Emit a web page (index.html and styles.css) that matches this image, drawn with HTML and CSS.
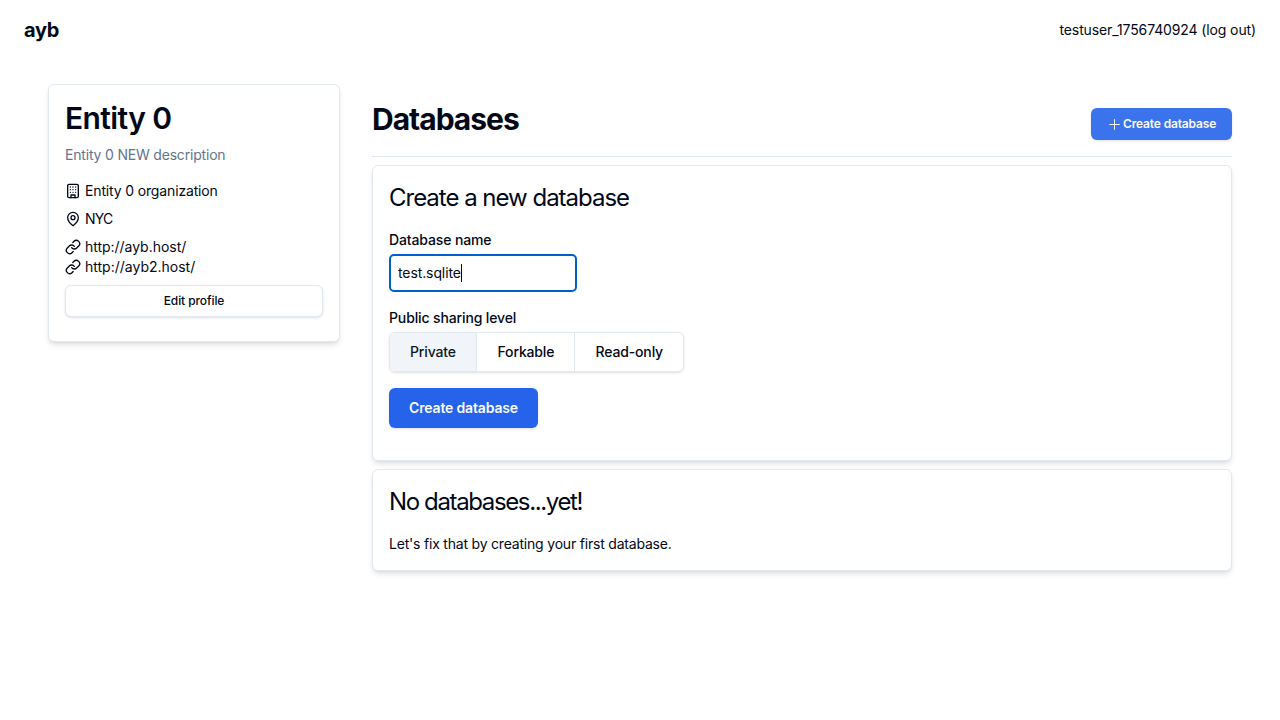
FILE: index.html
```html
<!DOCTYPE html>
<html lang="en">
<head>
<meta charset="utf-8">
<title>ayb</title>
<link rel="stylesheet" href="styles.css">
</head>
<body>
<header class="topbar">
  <div class="brand"><span>ayb</span></div>
  <div class="account"><span>testuser_1756740924 (log out)</span></div>
</header>
<div class="layout">
  <aside class="card profile">
    <h1 class="profile-name"><span>Entity 0</span></h1>
    <p class="profile-desc"><span>Entity 0 NEW description</span></p>
    <div class="fact">
      <svg class="icon" viewBox="0 0 24 24"><rect x="4" y="2" width="16" height="20" rx="2"/><path d="M9 22v-4h6v4M8 6h.01M16 6h.01M12 6h.01M12 10h.01M12 14h.01M16 10h.01M16 14h.01M8 10h.01M8 14h.01"/></svg>
      <span class="t-org">Entity 0 organization</span>
    </div>
    <div class="fact">
      <svg class="icon" viewBox="0 0 24 24"><path d="M20 10c0 6-8 12-8 12s-8-6-8-12a8 8 0 0 1 16 0Z"/><circle cx="12" cy="10" r="3"/></svg>
      <span class="t-loc">NYC</span>
    </div>
    <div class="links">
      <div class="link">
        <svg class="icon" viewBox="0 0 24 24"><path d="M10 13a5 5 0 0 0 7.54.54l3-3a5 5 0 0 0-7.07-7.07l-1.72 1.71"/><path d="M14 11a5 5 0 0 0-7.54-.54l-3 3a5 5 0 0 0 7.07 7.07l1.71-1.71"/></svg>
        <span class="t-link1">http://ayb.host/</span>
      </div>
      <div class="link">
        <svg class="icon" viewBox="0 0 24 24"><path d="M10 13a5 5 0 0 0 7.54.54l3-3a5 5 0 0 0-7.07-7.07l-1.72 1.71"/><path d="M14 11a5 5 0 0 0-7.54-.54l-3 3a5 5 0 0 0 7.07 7.07l1.71-1.71"/></svg>
        <span class="t-link2">http://ayb2.host/</span>
      </div>
    </div>
    <button class="edit"><span>Edit profile</span></button>
  </aside>
  <main class="main">
    <div class="heading">
      <h1 class="heading-title"><span>Databases</span></h1>
      <button class="create-small">
        <svg class="plus" viewBox="0 0 15 15"><path d="M7.5 2.25v10.5M2.25 7.5h10.5"/></svg>
        <span>Create database</span>
      </button>
    </div>
    <section class="card form">
      <h3 class="card-title t-create"><span>Create a new database</span></h3>
      <div class="label t-name"><span>Database name</span></div>
      <div class="input"><span>test.sqlite</span><i class="caret"></i></div>
      <div class="label t-level"><span>Public sharing level</span></div>
      <div class="segments">
        <div class="segment private"><span>Private</span></div>
        <div class="segment forkable"><span>Forkable</span></div>
        <div class="segment readonly"><span>Read-only</span></div>
      </div>
      <button class="create"><span>Create database</span></button>
    </section>
    <section class="card empty">
      <h3 class="card-title t-none"><span>No databases...yet!</span></h3>
      <p class="hint"><span>Let's fix that by creating your first database.</span></p>
    </section>
  </main>
</div>
</body>
</html>
```

FILE: styles.css
```css
* { box-sizing: border-box; }
body {
  margin: 0;
  min-height: 100vh;
  background: #fff;
  color: #020817;
  font: 14px/20px Inter, "Liberation Sans", sans-serif;
}
h1, h3, p { margin: 0; }
span { white-space: nowrap; }
button { font: inherit; color: inherit; margin: 0; }
.topbar {
  display: flex;
  justify-content: space-between;
  align-items: center;
  height: 60px;
  padding: 0 24px;
}
.brand { font-size: 20px; line-height: 28px; font-weight: 700; letter-spacing: -0.3px; }
.account { letter-spacing: -0.12px; }
.layout {
  display: flex;
  align-items: flex-start;
  gap: 32px;
  padding: 24px 48px 0;
}
.card {
  border: 1px solid #e2e8f0;
  border-radius: 6px;
  background: #fff;
  box-shadow: 0 4px 6px -1px rgba(0,0,0,.1), 0 2px 4px -2px rgba(0,0,0,.1);
  padding: 16px;
}
.profile { width: 292px; height: 258px; }
.profile-name { margin-top: -1px; font-size: 30px; line-height: 36px; font-weight: 600; letter-spacing: -0.6px; }
.profile-desc { color: #64748b; margin: 9px 0 16px; letter-spacing: -0.19px; }
.fact { display: flex; align-items: center; gap: 4px; margin-bottom: 8px; }
.link { display: flex; align-items: center; gap: 4px; }
.t-org { letter-spacing: -0.15px; }
.t-loc { letter-spacing: -0.8px; }
.t-link1 { letter-spacing: -0.03px; }
.icon {
  width: 16px;
  height: 16px;
  fill: none;
  stroke: currentColor;
  stroke-width: 2;
  stroke-linecap: round;
  stroke-linejoin: round;
}
.edit {
  display: block;
  width: 100%;
  height: 32px;
  margin-top: 8px;
  padding: 0;
  border: 1px solid #e2e8f0;
  border-radius: 6px;
  background: #fff;
  box-shadow: 0 1px 3px rgba(0,0,0,.1), 0 1px 2px -1px rgba(0,0,0,.1);
  font-size: 12px;
  font-weight: 500;
  letter-spacing: -0.1px;
}
.main { flex: 1; display: flex; flex-direction: column; gap: 8px; }
.heading {
  display: flex;
  justify-content: space-between;
  height: 73px;
  padding-top: 17px;
  border-bottom: 1px solid #e2e8f0;
}
.heading-title { font-size: 30px; line-height: 36px; font-weight: 700; letter-spacing: -1px; }
.create-small {
  display: flex;
  align-items: center;
  gap: 1px;
  width: 141px;
  height: 32px;
  margin-top: 7px;
  padding: 0 0 0 16px;
  border: 0;
  border-radius: 6px;
  background: #3b73ed;
  color: #f8fafc;
  box-shadow: 0 1px 3px rgba(0,0,0,.1), 0 1px 2px -1px rgba(0,0,0,.1);
  font-size: 12px;
  font-weight: 600;
  letter-spacing: -0.15px;
}
.plus { width: 15px; height: 15px; flex: none; fill: none; stroke: currentColor; stroke-width: 1; }
.form { height: 296px; }
.card-title { font-size: 24px; line-height: 32px; font-weight: 400; }
.t-create { letter-spacing: -1.01px; }
.t-none { letter-spacing: -1.37px; }
.label { font-weight: 500; letter-spacing: -0.13px; }
.form .t-name { margin-top: 16px; }
.input {
  display: flex;
  align-items: center;
  width: 188px;
  height: 38px;
  margin: 4px 0 16px;
  padding-left: 7px;
  border: 2px solid #005fcc;
  border-radius: 5px;
  letter-spacing: -0.1px;
}
.caret { width: 1px; height: 18px; background: #020817; }
.segments {
  display: flex;
  width: 295px;
  height: 40px;
  margin-top: 4px;
  border: 1px solid #e2e8f0;
  border-radius: 6px;
  box-shadow: 0 1px 3px rgba(0,0,0,.1), 0 1px 2px -1px rgba(0,0,0,.1);
  font-weight: 500;
  letter-spacing: -0.15px;
}
.segment { display: flex; align-items: center; padding-left: 20.5px; border-left: 1px solid #e2e8f0; }
.private { width: 86px; padding-left: 20px; border-left: 0; background: #f1f5f9; color: #0f172a; border-radius: 5px 0 0 5px; }
.forkable { width: 98px; }
.readonly { flex: 1; }
.create {
  display: block;
  width: 149px;
  height: 40px;
  margin-top: 16px;
  padding: 0;
  border: 0;
  border-radius: 6px;
  background: #2563eb;
  color: #f8fafc;
  box-shadow: 0 1px 3px rgba(0,0,0,.1), 0 1px 2px -1px rgba(0,0,0,.1);
  font-weight: 600;
  letter-spacing: -0.17px;
}
.empty { height: 102px; }
.hint { margin-top: 16px; letter-spacing: -0.2px; }
```
